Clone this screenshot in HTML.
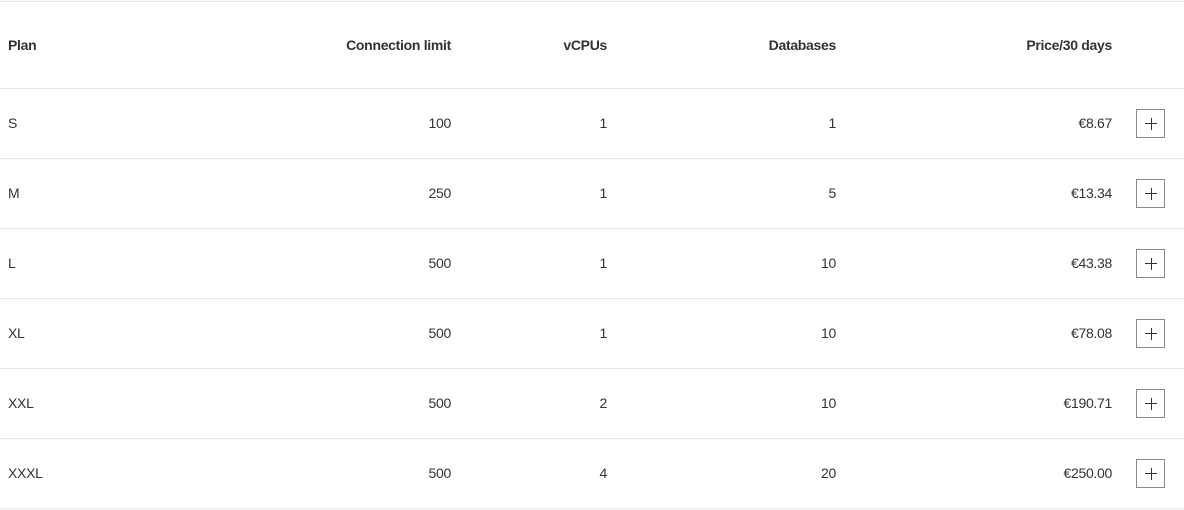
<!DOCTYPE html>
<html><head><style>
body{margin:0;width:1184px;height:509px;background:#fff;font-family:"Liberation Sans",sans-serif;color:#333;font-size:14px;letter-spacing:-0.3px;overflow:hidden}
.row{position:absolute;left:0;width:1184px;border-top:1px solid #e5e5e5}
.c{position:absolute;white-space:nowrap}
.h{font-weight:bold;color:#333}
.btn{position:absolute;left:1136px;width:27px;height:27px;border:1px solid #888;box-sizing:content-box}
.btn:before{content:"";position:absolute;left:8px;top:13px;width:12px;height:1.2px;background:#333}
.btn:after{content:"";position:absolute;left:13.5px;top:8px;width:1.2px;height:12px;background:#333}
</style></head><body>
<div class="row" style="top:1px;height:87px">
<div class="c h" style="left:8px;top:35px">Plan</div>
<div class="c h" style="right:733px;top:35px">Connection limit</div>
<div class="c h" style="right:577px;top:35px">vCPUs</div>
<div class="c h" style="right:348px;top:35px">Databases</div>
<div class="c h" style="right:72px;top:35px">Price/30 days</div>
</div>
<div class="row" style="top:88px;height:69px"><div class="c" style="left:8px;top:26px">S</div><div class="c" style="right:733px;top:26px">100</div><div class="c" style="right:577px;top:26px">1</div><div class="c" style="right:348px;top:26px">1</div><div class="c" style="right:72px;top:26px">€8.67</div><div class="btn" style="top:20px"></div></div>
<div class="row" style="top:158px;height:69px"><div class="c" style="left:8px;top:26px">M</div><div class="c" style="right:733px;top:26px">250</div><div class="c" style="right:577px;top:26px">1</div><div class="c" style="right:348px;top:26px">5</div><div class="c" style="right:72px;top:26px">€13.34</div><div class="btn" style="top:20px"></div></div>
<div class="row" style="top:228px;height:69px"><div class="c" style="left:8px;top:26px">L</div><div class="c" style="right:733px;top:26px">500</div><div class="c" style="right:577px;top:26px">1</div><div class="c" style="right:348px;top:26px">10</div><div class="c" style="right:72px;top:26px">€43.38</div><div class="btn" style="top:20px"></div></div>
<div class="row" style="top:298px;height:69px"><div class="c" style="left:8px;top:26px">XL</div><div class="c" style="right:733px;top:26px">500</div><div class="c" style="right:577px;top:26px">1</div><div class="c" style="right:348px;top:26px">10</div><div class="c" style="right:72px;top:26px">€78.08</div><div class="btn" style="top:20px"></div></div>
<div class="row" style="top:368px;height:69px"><div class="c" style="left:8px;top:26px">XXL</div><div class="c" style="right:733px;top:26px">500</div><div class="c" style="right:577px;top:26px">2</div><div class="c" style="right:348px;top:26px">10</div><div class="c" style="right:72px;top:26px">€190.71</div><div class="btn" style="top:20px"></div></div>
<div class="row" style="top:438px;height:69px"><div class="c" style="left:8px;top:26px">XXXL</div><div class="c" style="right:733px;top:26px">500</div><div class="c" style="right:577px;top:26px">4</div><div class="c" style="right:348px;top:26px">20</div><div class="c" style="right:72px;top:26px">€250.00</div><div class="btn" style="top:20px"></div></div>
<div class="row" style="top:508px;height:1px"></div>
</body></html>
